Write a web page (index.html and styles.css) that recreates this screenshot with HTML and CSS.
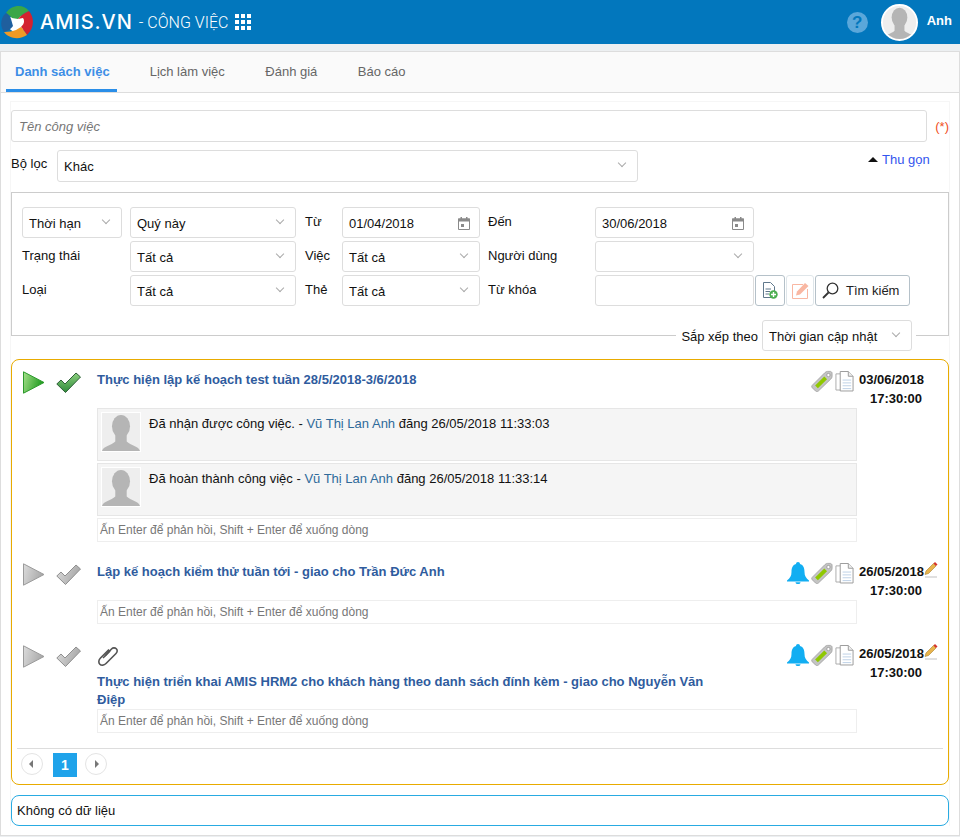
FILE: index.html
```html
<!DOCTYPE html>
<html lang="en">
<head>
    <meta charset="UTF-8">
    <meta name="viewport" content="width=device-width, initial-scale=1.0">
    <title>AMIS.VN - Công việc</title>
    <link rel="stylesheet" href="styles.css">
</head>
<body>

    <svg class="sprites" width="0" height="0">
        <defs>
            <linearGradient id="g-green" x1="0" y1="0" x2="1" y2="0.3">
                <stop offset="0" stop-color="#a6e08a"/><stop offset="1" stop-color="#1f9a1f"/>
            </linearGradient>
            <linearGradient id="g-gray" x1="0" y1="0" x2="1" y2="0.3">
                <stop offset="0" stop-color="#dcdcdc"/><stop offset="1" stop-color="#a8a8a8"/>
            </linearGradient>
            <linearGradient id="g-check" x1="0" y1="0" x2="0" y2="1">
                <stop offset="0" stop-color="#8ccf7e"/><stop offset="1" stop-color="#2f8b3a"/>
            </linearGradient>
        </defs>
        <symbol id="person" viewBox="0 0 40 40">
            <rect width="40" height="40" fill="#eeeeee"/>
            <ellipse cx="20" cy="14" rx="9.5" ry="12" fill="#b5b5b5"/>
            <path d="M0 40C1 35 10 34 14 30V22H26V30C30 34 39 35 40 40Z" fill="#b5b5b5"/>
        </symbol>
        <symbol id="tag" viewBox="0 0 24 24">
            <path d="M1.5 16.5L15 3C16 2 17 1.5 18 1.5H21C22 1.5 23 2.500 23 3.500V7C23 8 22.500 9 21.500 10L8 23C7 24 6 24 5 23L1.500 19.500C.5 18.500 .5 17.500 1.500 16.500Z" fill="#c4c4c4" stroke="#999" stroke-width=".8"/>
            <path d="M4.500 17L14.500 7L17.500 10L7.500 20Z" fill="#8fc800"/>
            <circle cx="19" cy="5.500" r="1.800" fill="#fff" stroke="#888" stroke-width=".7"/>
        </symbol>
        <symbol id="doc" viewBox="0 0 20 22">
            <path d="M1 3.500H10L13 6.500V20.500H1Z" fill="#fff" stroke="#aaa"/>
            <path d="M5.500 1H14L19 6V21.500H5.500Z" fill="#fff" stroke="#999"/>
            <path d="M14 1V6H19" fill="#eee" stroke="#999"/>
            <path d="M8 10H17M8 13H17M8 16H17M8 19H17" stroke="#bcd0e6"/>
        </symbol>
        <symbol id="bell" viewBox="0 0 22 22">
            <path d="M11 0C12.200 0 13 .8 13 2C16.500 3 17.500 6 17.500 10C17.500 14 19 16 22 18.500V19.500H0V18.500C3 16 4.500 14 4.500 10C4.500 6 5.500 3 9 2C9 .8 9.800 0 11 0Z" fill="#12aef2"/>
            <path d="M8.500 20.200H13.500C13.500 21.500 12.300 22 11 22C9.700 22 8.500 21.500 8.500 20.200Z" fill="#12aef2"/>
        </symbol>
        <symbol id="pencil" viewBox="0 0 14 16">
            <path d="M1 15H13" stroke="#ccc" stroke-width="1.200"/>
            <path d="M1 12.500L2 9L9.500 1.500L12 4L4.500 11.500Z" fill="#e9b44c" stroke="#a8802c" stroke-width=".6"/>
            <path d="M9.500 1.500L11 0L13.500 2.500L12 4Z" fill="#d6332c"/>
        </symbol>
        <symbol id="calendar" viewBox="0 0 12 13">
            <path d="M.5 2H11.500V12.500H.5Z" fill="none" stroke="#8a8a8a"/>
            <path d="M0 1.500H12V4.500H0ZM2.500 0H4V2H2.500ZM8 0H9.500V2H8ZM3 7H6V10H3Z" fill="#8a8a8a"/>
        </symbol>
        <symbol id="play" viewBox="0 0 22 23">
            <path d="M.5 .8L21 11.500L.5 22.200Z" stroke-width="1"/>
        </symbol>
        <symbol id="check" viewBox="0 0 25 21">
            <path d="M.8 12L5 8L9 12L20 1L24.500 5L9.500 20.500Z" stroke-width="1"/>
        </symbol>
    </svg>

    <header class="topbar">
        <svg class="logo" viewBox="0 0 32 34" width="32" height="34">
            <circle cx="16" cy="18.500" r="9" fill="#fff"/>
            <path d="M5 8C10 0 22 -2 28 6C24 8 20 10 17 14L11 13C9 11 7 9 5 8Z" fill="#3aa648"/>
            <path d="M28 6C34 13 33 24 26 30C24 27 22 24 20 22C23 19 24 16 22 13L17 14C20 10 24 8 28 6Z" fill="#d3222f"/>
            <path d="M26 30C19 35 8 34 3 27C8 27 12 26 15 25L20 22C22 24 24 27 26 30Z" fill="#f09a25"/>
            <path d="M5 8C-1 13 -1 22 3 27C7 26 10 24 12 21L10 14C9 11 7 9 5 8Z" fill="#1f5f9e"/>
        </svg>
        <span class="brand">AMIS.VN</span>
        <span class="module">- CÔNG VIỆC</span>
        <div class="apps"><i></i><i></i><i></i><i></i><i></i><i></i><i></i><i></i><i></i></div>
        <div class="help">?</div>
        <div class="user-pic"><svg width="33" height="33"><use href="#person"/></svg></div>
        <span class="user-name">Anh</span>
    </header>

    <div class="page">
        <nav class="tabs">
            <a class="tab active">Danh sách việc</a>
            <a class="tab">Lịch làm việc</a>
            <a class="tab">Đánh giá</a>
            <a class="tab">Báo cáo</a>
        </nav>

        <div class="content">
            <div class="name-row">
                <div class="field name-input">Tên công việc</div>
                <span class="required">(*)</span>
            </div>

            <div class="preset-row">
                <span class="preset-label">Bộ lọc</span>
                <div class="field select preset-select">Khác</div>
                <a class="collapse"><span class="caret"></span>Thu gọn</a>
            </div>

            <div class="filter-box">
                <div class="filter-grid">
                    <div class="field select">Thời hạn</div>
                    <div class="field select">Quý này</div>
                    <span class="lbl">Từ</span>
                    <div class="field date">01/04/2018 <svg width="12" height="13"><use href="#calendar"/></svg></div>
                    <span class="lbl">Đến</span>
                    <div class="field date">30/06/2018 <svg width="12" height="13"><use href="#calendar"/></svg></div>
                    <span></span>

                    <span class="lbl">Trạng thái</span>
                    <div class="field select">Tất cả</div>
                    <span class="lbl">Việc</span>
                    <div class="field select">Tất cả</div>
                    <span class="lbl">Người dùng</span>
                    <div class="field select"></div>
                    <span></span>

                    <span class="lbl">Loại</span>
                    <div class="field select">Tất cả</div>
                    <span class="lbl">Thẻ</span>
                    <div class="field select">Tất cả</div>
                    <span class="lbl">Từ khóa</span>
                    <div class="field"></div>
                    <div class="actions">
                        <button class="btn icon-btn">
                            <svg width="16" height="17" viewBox="0 0 16 17">
                                <path d="M1.500 .5H8.500L12.500 4.500V15.500H1.500Z" fill="#fff" stroke="#60788c"/>
                                <path d="M3.500 7H9M3.500 9.500H8M3.500 12H7" stroke="#60788c"/>
                                <circle cx="11.500" cy="12.500" r="4.200" fill="#4caf50"/>
                                <path d="M9 12.500H14M11.500 10V15" stroke="#fff" stroke-width="1.400"/>
                            </svg>
                        </button>
                        <button class="btn icon-btn disabled">
                            <svg width="17" height="17" viewBox="0 0 17 17">
                                <path d="M.5 2.500H11M15.500 7V16.500H.5V2.500" fill="none" stroke="#f9b7a2"/>
                                <path d="M4 13.500L5 9.500L13 1L16.500 4L8 12.500Z" fill="#f9b7a2"/>
                            </svg>
                        </button>
                        <button class="btn search-btn">
                            <svg width="17" height="17" viewBox="0 0 17 17">
                                <circle cx="10.500" cy="6.500" r="5.300" fill="none" stroke="#333" stroke-width="1.300"/>
                                <path d="M6.500 10.500L1 16" stroke="#333" stroke-width="1.800"/>
                            </svg>
                            Tìm kiếm
                        </button>
                    </div>
                </div>
            </div>

            <div class="sort-row">
                <div class="sort">
                    <span class="sort-label">Sắp xếp theo</span>
                    <div class="field select sort-select">Thời gian cập nhật</div>
                </div>
            </div>

            <section class="task-list">
                <article class="task">
                    <div class="task-head">
                        <div class="task-state">
                            <svg class="play-on" width="22" height="23"><use href="#play"/></svg>
                            <svg class="check-on" width="25" height="21"><use href="#check"/></svg>
                        </div>
                        <div class="task-title"><a>Thực hiện lập kế hoạch test tuần 28/5/2018-3/6/2018</a></div>
                        <div class="task-meta">
                            <svg width="22" height="22"><use href="#tag"/></svg>
                            <svg width="19" height="22"><use href="#doc"/></svg>
                            <div class="due">03/06/2018<br><span>17:30:00</span></div>
                            <span class="edit-slot"></span>
                        </div>
                    </div>
                    <div class="task-body">
                        <div class="comment">
                            <svg width="40" height="40"><use href="#person"/></svg>
                            <p>Đã nhận được công việc. - <a>Vũ Thị Lan Anh</a> đăng 26/05/2018 11:33:03</p>
                        </div>
                        <div class="comment">
                            <svg width="40" height="40"><use href="#person"/></svg>
                            <p>Đã hoàn thành công việc - <a>Vũ Thị Lan Anh</a> đăng 26/05/2018 11:33:14</p>
                        </div>
                        <div class="reply">Ấn Enter để phản hồi, Shift + Enter để xuống dòng</div>
                    </div>
                </article>

                <article class="task">
                    <div class="task-head">
                        <div class="task-state">
                            <svg class="play-off" width="22" height="23"><use href="#play"/></svg>
                            <svg class="check-off" width="25" height="21"><use href="#check"/></svg>
                        </div>
                        <div class="task-title"><a>Lập kế hoạch kiểm thử tuần tới - giao cho Trần Đức Anh</a></div>
                        <div class="task-meta">
                            <svg width="22" height="22"><use href="#bell"/></svg>
                            <svg width="22" height="22"><use href="#tag"/></svg>
                            <svg width="19" height="22"><use href="#doc"/></svg>
                            <div class="due">26/05/2018<br><span>17:30:00</span></div>
                            <svg class="edit-slot" width="14" height="16"><use href="#pencil"/></svg>
                        </div>
                    </div>
                    <div class="task-body">
                        <div class="reply">Ấn Enter để phản hồi, Shift + Enter để xuống dòng</div>
                    </div>
                </article>

                <article class="task">
                    <div class="task-head">
                        <div class="task-state">
                            <svg class="play-off" width="22" height="23"><use href="#play"/></svg>
                            <svg class="check-off" width="25" height="21"><use href="#check"/></svg>
                        </div>
                        <div class="task-title">
                            <svg class="clip" width="22" height="22" viewBox="0 0 22 22">
                                <path d="M8 11L14.500 4C16 2.500 18 2.500 19.300 3.800C20.600 5.100 20.500 7 19 8.500L9 18.500C7 20.500 4.300 20.700 2.800 19.200C1.300 17.700 1.500 15 3.500 13L12 4.500" fill="none" stroke="#555" stroke-width="1.600"/>
                                <path d="M6 13L13 6" fill="none" stroke="#555" stroke-width="1.600"/>
                            </svg>
                            <a>Thực hiện triển khai AMIS HRM2 cho khách hàng theo danh sách đính kèm - giao cho Nguyễn Văn Điệp</a>
                        </div>
                        <div class="task-meta">
                            <svg width="22" height="22"><use href="#bell"/></svg>
                            <svg width="22" height="22"><use href="#tag"/></svg>
                            <svg width="19" height="22"><use href="#doc"/></svg>
                            <div class="due">26/05/2018<br><span>17:30:00</span></div>
                            <svg class="edit-slot" width="14" height="16"><use href="#pencil"/></svg>
                        </div>
                    </div>
                    <div class="task-body">
                        <div class="reply">Ấn Enter để phản hồi, Shift + Enter để xuống dòng</div>
                    </div>
                </article>

                <div class="pager">
                    <span class="pager-arrow prev"></span>
                    <span class="pager-num">1</span>
                    <span class="pager-arrow next"></span>
                </div>
            </section>

            <div class="empty-box">Không có dữ liệu</div>
        </div>
    </div>

</body>
</html>
```

FILE: styles.css
```css
* {
    box-sizing: border-box;
}
body {
    margin: 0;
    font-family: "Liberation Sans", Arial, sans-serif;
    font-size: 13px;
    color: #111;
    background-color: #eceff1;
}
.sprites {
    position: absolute;
}
a {
    cursor: pointer;
}

/* Top bar */
.topbar {
    display: flex;
    align-items: center;
    height: 44px;
    padding: 0 8px 0 1px;
    background-color: #0277bd;
    color: white;
}
.brand {
    margin-left: 7px;
    font-family: "Inter", sans-serif;
    font-size: 20px;
    font-weight: 500;
    letter-spacing: 0.95px;
}
.module {
    margin-left: 6px;
    font-family: "Roboto", sans-serif;
    font-size: 16px;
    font-weight: 300;
}
.apps {
    display: grid;
    grid-template-columns: repeat(3, 4px);
    grid-auto-rows: 4px;
    gap: 2px;
    margin-left: 7px;
}
.apps i {
    background-color: white;
}
.help {
    width: 21px;
    height: 21px;
    margin-left: auto;
    border-radius: 50%;
    background-color: #5ba7da;
    color: #0277bd;
    font-size: 17px;
    font-weight: bold;
    line-height: 21px;
    text-align: center;
}
.user-pic {
    width: 37px;
    height: 37px;
    margin-left: 13px;
    border: 2px solid white;
    border-radius: 50%;
    overflow: hidden;
    background-color: #eee;
}
.user-name {
    margin-left: 9px;
    margin-bottom: 4px;
    font-weight: bold;
}

/* Page panel */
.page {
    margin-top: 7px;
    min-height: 785px;
    background-color: white;
    border: 1px solid #ddd;
}
.tabs {
    display: flex;
    gap: 22.5px;
    height: 41px;
    padding-left: 5px;
    background-color: #fafafa;
    border-bottom: 1px solid #ddd;
}
.tab {
    height: 40px;
    padding: 0 9px;
    color: #666;
    line-height: 40px;
}
.tab.active {
    margin-right: 1.5px;
    padding: 0 7px 0 9px;
    color: #3d8ee6;
    font-weight: bold;
    border-bottom: 3px solid #2a8ee8;
}
.content {
    margin: 8px 9px 0 9px;
    padding-top: 8px;
    border: 1px solid #f6f6f6;
    border-bottom: none;
}

/* Form fields */
.field {
    position: relative;
    display: flex;
    align-items: center;
    height: 31px;
    padding: 0 6px;
    background-color: white;
    border: 1px solid #ddd;
    border-radius: 3px;
}
.select::after {
    content: "";
    position: absolute;
    right: 12px;
    top: 9px;
    width: 5px;
    height: 5px;
    border-right: 1px solid #aaa;
    border-bottom: 1px solid #aaa;
    transform: rotate(45deg);
}
.date {
    justify-content: space-between;
    padding-right: 9px;
}
.name-row {
    display: flex;
    align-items: center;
}
.name-input {
    width: 917px;
    height: 32px;
    padding-left: 7px;
    color: #777;
    font-style: italic;
}
.required {
    margin-left: 8px;
    color: #f04e23;
}
.preset-row {
    display: flex;
    align-items: flex-start;
    margin-top: 8px;
}
.preset-label {
    width: 46px;
    margin-top: 6px;
}
.preset-select {
    width: 581px;
    height: 32px;
}
.collapse {
    margin: 2px 0 0 230px;
    color: #3355ee;
    line-height: 15px;
}
.caret {
    display: inline-block;
    width: 0;
    height: 0;
    margin-right: 4px;
    vertical-align: 2px;
    border-left: 5px solid transparent;
    border-right: 5px solid transparent;
    border-bottom: 5px solid #111;
}

/* Filter */
.filter-box {
    height: 144px;
    margin-top: 10px;
    padding: 14px 10px;
    border: 1px solid #ccc;
}
.filter-grid {
    display: grid;
    grid-template-columns: 108px 175px 37px 146px 107px 159px auto;
    grid-auto-rows: 31px;
    row-gap: 3px;
    align-items: center;
}
.filter-grid > :nth-child(7n+1),
.filter-grid > :nth-child(7n+4) {
    margin-right: 8px;
}
.filter-grid > :nth-child(7n+2) {
    margin-right: 9px;
}
.filter-grid > .field {
    padding-top: 2px;
}
.filter-grid > .lbl {
    margin-top: -3px;
}
.actions {
    display: flex;
    gap: 1px;
    margin-left: 1px;
}
.btn {
    display: flex;
    align-items: center;
    justify-content: center;
    height: 31px;
    padding: 0;
    background-color: white;
    border: 1px solid #b5c1c9;
    border-radius: 3px;
    font-family: inherit;
    font-size: 13px;
    color: #222;
}
.icon-btn {
    width: 30px;
}
.icon-btn.disabled {
    width: 28px;
    border-color: #dfe6ea;
}
.search-btn {
    justify-content: flex-start;
    gap: 7px;
    width: 95px;
    padding-left: 6px;
}
.sort-row {
    display: flex;
    justify-content: flex-end;
    margin: -16px 33px 0 0;
}
.sort {
    display: flex;
    align-items: center;
    gap: 4px;
    padding: 0 4px 0 5px;
    background-color: white;
}
.sort-label {
    margin-top: 1px;
}
.sort-select {
    width: 150px;
    padding-top: 2px;
}

/* Tasks */
.task-list {
    height: 426px;
    margin-top: 8px;
    padding: 8px 5px;
    border: 1px solid #e8ab00;
    border-radius: 8px;
}
.task {
    margin-bottom: 18px;
}
.task-head {
    display: flex;
    align-items: flex-start;
    min-height: 40px;
}
.task-state {
    display: flex;
    align-items: center;
    gap: 11px;
    width: 80px;
    padding: 3px 0 0 6px;
}
.play-on {
    fill: url(#g-green);
    stroke: #2d9a2d;
}
.check-on {
    fill: url(#g-check);
    stroke: #2f5f38;
}
.play-off {
    fill: url(#g-gray);
    stroke: #9b9b9b;
}
.check-off {
    fill: url(#g-gray);
    stroke: #8f8f8f;
}
.task-title {
    width: 615px;
    padding-top: 3px;
    font-weight: bold;
    line-height: 18px;
}
.task-title a {
    color: #2f5c9e;
}
.clip {
    display: block;
    margin-bottom: 6px;
}
.task-meta {
    display: flex;
    flex: 1;
    align-items: flex-start;
    justify-content: flex-end;
    gap: 2px;
    padding: 2px 5px 0 0;
}
.due {
    width: 66px;
    margin-left: 2px;
    font-weight: bold;
    line-height: 19px;
    text-align: right;
}
.due span {
    margin-right: 2px;
}
.edit-slot {
    flex: none;
    width: 14px;
    margin-left: -2px;
}
.task-body {
    width: 760px;
    margin-left: 80px;
}
.comment {
    display: flex;
    gap: 8px;
    height: 53px;
    margin-bottom: 2px;
    padding: 3px;
    background-color: #f5f5f5;
    border: 1px solid #e6e6e6;
}
.comment svg {
    border: 1px solid white;
}
.comment p {
    margin: 4px 0 0 0;
}
.comment a {
    color: #2f6a9a;
}
.reply {
    height: 24px;
    padding: 0 2px;
    border: 1px solid #eee;
    color: #777;
    font-size: 12px;
    line-height: 22px;
}
.pager {
    display: flex;
    align-items: flex-start;
    gap: 8px;
    margin-top: -3px;
    padding: 4px 0 0 4px;
    border-top: 1px solid #ddd;
}
.pager-arrow {
    position: relative;
    width: 22px;
    height: 22px;
    border: 1px solid #e4e4e4;
    border-radius: 50%;
}
.prev {
    margin-right: 2px;
}
.pager-arrow::after {
    content: "";
    position: absolute;
    top: 6px;
    border-top: 4px solid transparent;
    border-bottom: 4px solid transparent;
}
.prev::after {
    left: 7px;
    border-right: 4px solid #777;
}
.next::after {
    left: 9px;
    border-left: 4px solid #777;
}
.pager-num {
    width: 24px;
    height: 24px;
    background-color: #1fa3ea;
    color: white;
    font-size: 14px;
    font-weight: bold;
    line-height: 24px;
    text-align: center;
}
.empty-box {
    height: 31px;
    margin-top: 10px;
    padding: 0 5px;
    border: 1px solid #29abe2;
    border-radius: 8px;
    line-height: 30px;
}
```
